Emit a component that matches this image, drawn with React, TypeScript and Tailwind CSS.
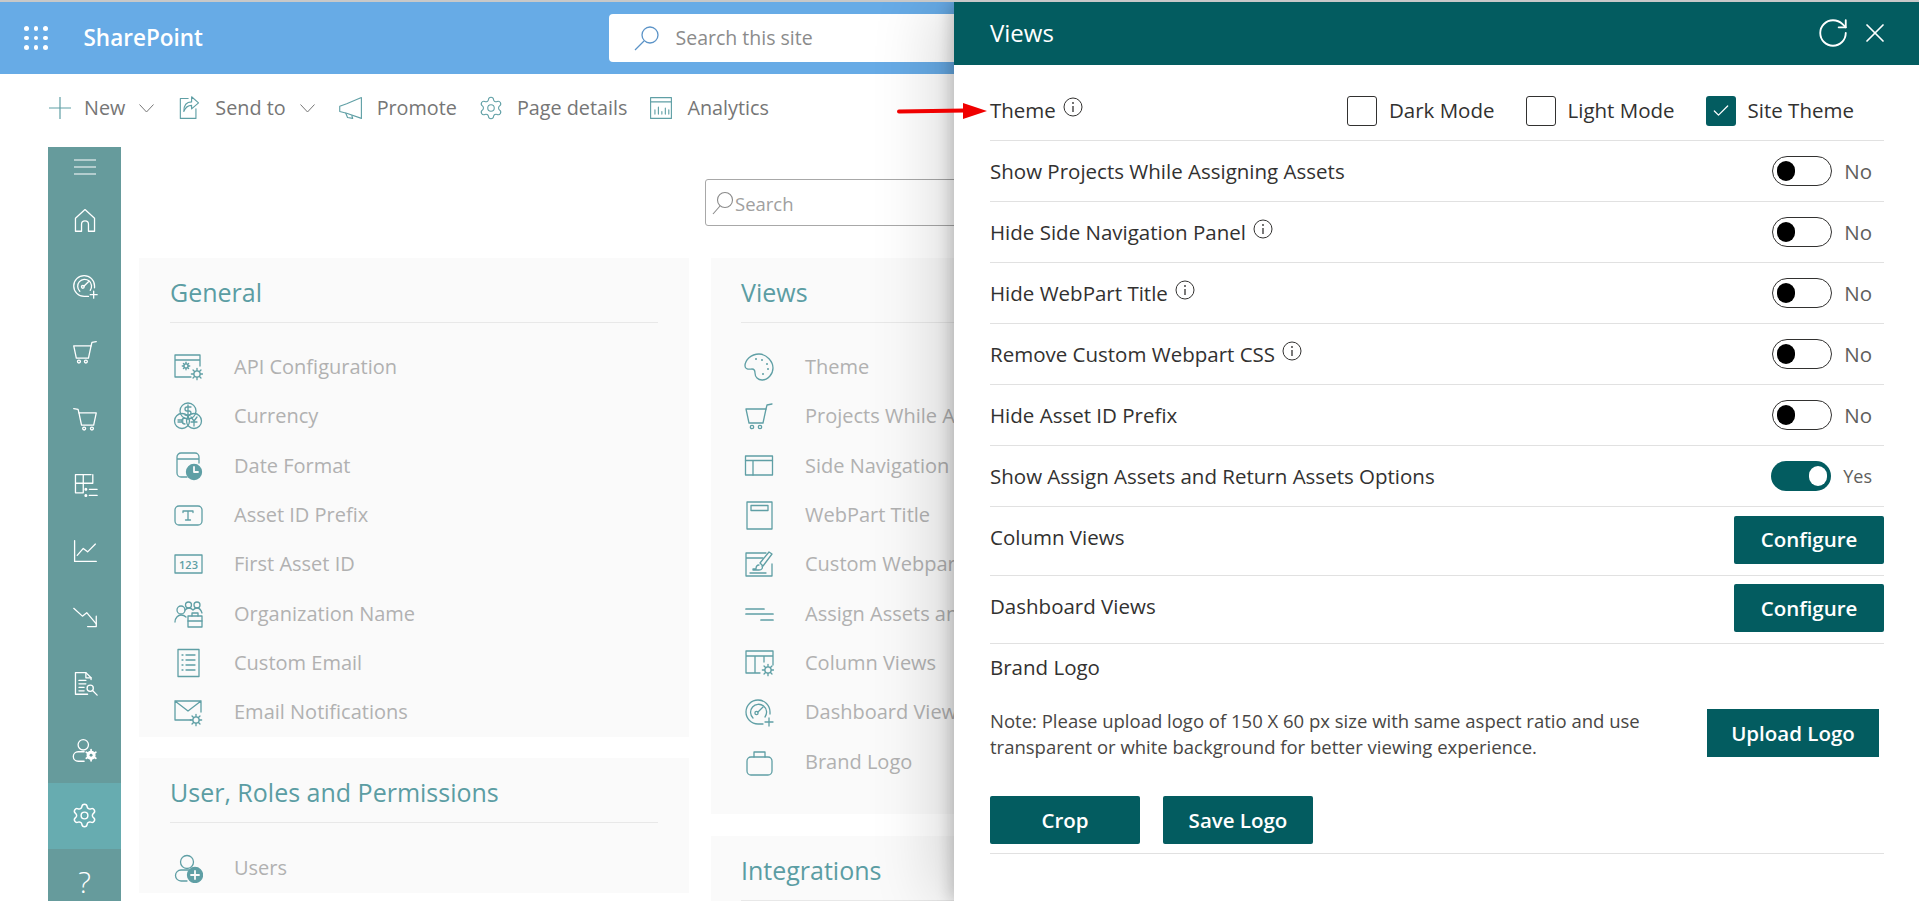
import React from 'react'
import { RotateCw, Settings, X, Check } from 'lucide-react'

function Svg({ size = 30, sw = 1.3, children, className = '' }: { size?: number; sw?: number; children: React.ReactNode; className?: string }) {
	return (
		<svg width={size} height={size} viewBox="0 0 30 30" fill="none" stroke="currentColor" strokeWidth={sw} strokeLinecap="round" strokeLinejoin="round" className={className}>
			{children}
		</svg>
	)
}

// small cog used on a lot of the settings icons
function Cog({ x, y, r = 4 }: { x: number; y: number; r?: number }) {
	const spokes = [0, 45, 90, 135, 180, 225, 270, 315]
	return (
		<g>
			<circle cx={x} cy={y} r={r * 0.7} fill="#fafafa" />
			{spokes.map(a => {
				const c = Math.cos((a * Math.PI) / 180)
				const s = Math.sin((a * Math.PI) / 180)
				return <line key={a} x1={x + c * r * 0.7} y1={y + s * r * 0.7} x2={x + c * r * 1.25} y2={y + s * r * 1.25} />
			})}
		</g>
	)
}

function Chevron() {
	return (
		<svg width="15" height="9" viewBox="0 0 15 9" fill="none" stroke="currentColor" strokeWidth="1" className="ml-[14px]">
			<path d="M0.500 0.500L7.500 8L14.500 0.500" />
		</svg>
	)
}

const cartRight = (
	<>
		<path d="M2 8h20l-3 14H5z" />
		<path d="M22 8l1-4 5-1" />
		<circle cx="8" cy="26" r="1.7" />
		<circle cx="16" cy="26" r="1.7" />
	</>
)
const cartLeft = (
	<>
		<path d="M8 8h20l-3 14H11z" />
		<path d="M8 8L7 4 2 3" />
		<circle cx="14" cy="26" r="1.7" />
		<circle cx="23" cy="26" r="1.7" />
	</>
)
const gauge = (
	<>
		<path d="M19 27H14A12 12 0 1 1 26 15v2" />
		<path d="M9 21a8 8 0 1 1 12-1" />
		<circle cx="12.5" cy="16" r="1.6" />
		<path d="M14 15l5-5" />
		<path d="M25 21v8M21 25h8" />
	</>
)

const sideIcons: React.ReactNode[] = [
	<path key="home" d="M4 28V13L15 3l11 10v15h-7v-8a4 4 0 0 0-8 0v8z" />,
	<g key="gauge">{gauge}</g>,
	<g key="c1">{cartRight}</g>,
	<g key="c2">{cartLeft}</g>,
	<g key="grid">
		<path d="M22 3H4v21h9M4 13h20V3M13 3v21" />
		<circle cx="16" cy="20" r="1" fill="currentColor" />
		<circle cx="16" cy="27" r="1" fill="currentColor" />
		<path d="M20 20h9M20 27h9" />
	</g>,
	<g key="line">
		<path d="M3 3v24h25" />
		<path d="M6 20l7-8 5 4 9-9" />
	</g>,
	<g key="down">
		<path d="M2 5l10 9 5-4 11 13" />
		<path d="M28 14v12H18" />
	</g>,
	<g key="doc">
		<path d="M22 11v-2l-6-6H4v25h14" />
		<path d="M16 3v6h6M8 12h8M8 16h8M8 20h6M8 24h6" />
		<circle cx="21" cy="21" r="3.6" />
		<path d="M24 24l5 5" />
	</g>,
	<g key="usercog">
		<circle cx="13" cy="9" r="6" />
		<path d="M14 28H7a5 5 0 0 1 0-11h7" />
		<circle cx="22" cy="21" r="4.5" fill="currentColor" />
		<path d="M22 14.500v13M16.500 17.500l11 7M27.500 17.500l-11 7" strokeWidth="2" />
		<circle cx="22" cy="21" r="1.700" fill="#669b9c" stroke="none" />
	</g>,
]

const rowIcons: Record<string, React.ReactNode> = {
	api: (
		<>
			<path d="M27 14V3H2v22h16M2 8h25" />
			<Cog x={13} y={14} r={3} />
			<Cog x={24} y={22} r={4.5} />
		</>
	),
	currency: (
		<>
			<circle cx="15" cy="10" r="8" />
			<circle cx="9" cy="20" r="7.5" />
			<circle cx="21" cy="20" r="7.5" />
			<path d="M18 6h-4a2 2 0 0 0 0 4h2a2 2 0 0 1 0 4h-4M15 4v12M12 17a3 3 0 1 0 0 6M5 19h5M5 21h5M18 16l3 4 3-4M21 20v5M18 21h6" />
		</>
	),
	date: (
		<>
			<path d="M14 26H8a4 4 0 0 1-4-4V6a4 4 0 0 1 4-4h14a4 4 0 0 1 4 4v6M4 8h22" />
			<circle cx="21" cy="21" r="7.5" fill="currentColor" />
			<path d="M21 16v5h4" stroke="#fafafa" strokeWidth="1.8" />
		</>
	),
	prefix: (
		<>
			<rect x="2" y="6" width="27" height="19" rx="4" />
			<path d="M10 11h10M15 11v9M12.5 20h5M10 11v1.5M20 11v1.5" />
		</>
	),
	first: (
		<>
			<rect x="2" y="6" width="27" height="18" />
			<text x="15.5" y="19.5" textAnchor="middle" fontSize="11" fontWeight="600" fill="currentColor" stroke="none" fontFamily='"Open Sans", sans-serif'>123</text>
		</>
	),
	org: (
		<>
			<circle cx="8" cy="11" r="4" />
			<path d="M2 23c0-4 3-7 6-7s4 1 5 2" />
			<circle cx="15.500" cy="6" r="3" />
			<circle cx="24" cy="6" r="3" />
			<path d="M12 11c1-1 2-2 4-2s3 1 4 2c1-1 2-2 4-2s4 2 5 5" />
			<rect x="15" y="17" width="14" height="11" />
			<path d="M19 17v-3h6v3M15 22h14" />
		</>
	),
	email: (
		<>
			<rect x="5" y="1.500" width="21" height="27" />
			<path d="M9 7h1M13 7h9M9 12h1M13 12h9M9 17h1M13 17h9M9 22h1M13 22h9" />
		</>
	),
	notif: (
		<>
			<path d="M18 23H2V4h26v11M2 4l13 10L28 4" />
			<Cog x={23} y={23} r={4.5} />
		</>
	),
	users: (
		<>
			<circle cx="14" cy="9" r="6.500" />
			<path d="M14 28H8a5.500 5.500 0 0 1 0-11h8" />
			<circle cx="22" cy="22" r="7.500" fill="currentColor" />
			<path d="M22 18v8M18 22h8" stroke="#fafafa" strokeWidth="1.8" />
		</>
	),
	theme: (
		<>
			<path d="M15 2C7 2 1 8 1 14c0 4 5 3 7 3s3 2 3 4c0 4 3 7 7 7 6 0 11-6 11-12S23 2 15 2z" />
			<g fill="currentColor" stroke="none">
				<circle cx="12" cy="7" r="1" />
				<circle cx="18" cy="8" r="1" />
				<circle cx="23" cy="12" r="1" />
				<circle cx="24" cy="17" r="1" />
				<circle cx="19" cy="22" r="1" />
			</g>
		</>
	),
	cart: cartRight,
	side: (
		<>
			<rect x="1.500" y="5" width="27" height="19" />
			<path d="M1.500 9.500h27M9 9.500V24" />
		</>
	),
	title: (
		<>
			<rect x="3" y="2" width="25" height="27" />
			<rect x="7" y="5.500" width="17" height="5" />
		</>
	),
	custom: (
		<>
			<path d="M28 15v12H2V4h20M2 9h17" />
			<path d="M28 5l-3-2-9 11 3 3z" />
			<path d="M15 16c-2 0-3 2-3 4h-3v1h6c3 0 4-2 3-4M6 24h16" />
		</>
	),
	assign: <path d="M2 10h18M2 15h27M17 21h12" strokeWidth="1.700" />,
	column: (
		<>
			<path d="M16 25H2V3h27v14M2 8h27M11 8v17M20 8v6" />
			<Cog x={24} y={22} r={4.5} />
		</>
	),
	dash: gauge,
	logo: (
		<>
			<rect x="3" y="10" width="25" height="18" rx="4" />
			<path d="M10 10V5h11v5" />
		</>
	),
}

const general = [
	['api', 'API Configuration'],
	['currency', 'Currency'],
	['date', 'Date Format'],
	['prefix', 'Asset ID Prefix'],
	['first', 'First Asset ID'],
	['org', 'Organization Name'],
	['email', 'Custom Email'],
	['notif', 'Email Notifications'],
]

// long labels stop where the open panel cuts them off
const views = [
	['theme', 'Theme'],
	['cart', 'Projects While As'],
	['side', 'Side Navigation'],
	['title', 'WebPart Title'],
	['custom', 'Custom Webpart CSS'],
	['assign', 'Assign Assets and'],
	['column', 'Column Views'],
	['dash', 'Dashboard Views'],
	['logo', 'Brand Logo'],
]

function Card({ title, items, className = 'pl-[31px]' }: { title: string; items: string[][]; className?: string }) {
	return (
		<section className={`bg-[#fafafa] pr-[31px] ${className}`}>
			<h2 className="h-[65px] border-b border-[#e8e8e8] pt-[15px] text-[25px] leading-[38px] text-[#5b9da3] whitespace-nowrap">{title}</h2>
			<ul className="pb-[0.500px] pt-[19.500px]">
				{items.map(([icon, label]) => (
					<li key={label} className="flex h-[49.3px] items-center whitespace-nowrap text-[20px] text-[#b1b1b1]">
						<span className="flex w-[64px] pl-[3px] text-[#5f9fa5]">
							<Svg>{rowIcons[icon]}</Svg>
						</span>
						{label}
					</li>
				))}
			</ul>
		</section>
	)
}

function Info() {
	return (
		<svg width="20" height="20" viewBox="0 0 20 20" fill="none" stroke="#323130" strokeWidth="1" className="mb-[7px] ml-[7px] shrink-0">
			<circle cx="10" cy="10" r="9" />
			<path d="M10 9v6" strokeWidth="1.300" />
			<circle cx="10" cy="6" r="0.900" fill="#323130" stroke="none" />
		</svg>
	)
}

function ToggleRow({ label, info, on }: { label: string; info?: boolean; on?: boolean }) {
	return (
		<div className="flex h-[61px] items-center justify-between border-b border-[#e1e1e1]">
			<div className="flex items-center">
				<span className="font-medium">{label}</span>
				{info && <Info />}
			</div>
			<div className="flex items-center gap-[12px] pr-[12px]">
				{on ? (
					<span className="flex h-[30px] w-[60px] items-center justify-end rounded-full bg-[#035c60] pr-[4px]">
						<span className="h-[20px] w-[18px] rounded-full bg-white" />
					</span>
				) : (
					<span className="flex h-[30px] w-[60px] items-center rounded-full border border-[#323130] pl-[4px]">
						<span className="h-[20px] w-[18px] rounded-full bg-black" />
					</span>
				)}
				<span className={on ? 'text-[18px] text-[#605e5c]' : 'text-[#605e5c]'}>{on ? 'Yes' : 'No'}</span>
			</div>
		</div>
	)
}

function TealButton({ children, className = '' }: { children: React.ReactNode; className?: string }) {
	return <button className={`h-[48px] rounded-[2px] bg-[#035c60] font-semibold text-white ${className}`}>{children}</button>
}

function CheckOption({ label, checked }: { label: string; checked?: boolean }) {
	return (
		<label className="flex items-center gap-[12px]">
			{checked ? (
				<span className="flex h-[30px] w-[30px] items-center justify-center rounded-[3px] bg-[#035c60] text-white">
					<Check size={20} strokeWidth={1.5} />
				</span>
			) : (
				<span className="h-[30px] w-[30px] rounded-[3px] border border-[#323130]" />
			)}
			<span className="font-medium">{label}</span>
		</label>
	)
}

function App() {
	return (
		<div className="relative h-[901px] w-[1919px] overflow-hidden border-t-2 border-[#c8c8c8] bg-white text-[#323130]" style={{ fontFamily: '"Open Sans", "Noto Sans", sans-serif' }}>
			{/* suite bar */}
			<header className="flex h-[72px] items-center bg-[#67abe6]">
				<div className="ml-[24px] grid grid-cols-3 gap-x-[5px] gap-y-[5px]">
					{[...Array(9)].map((_, i) => (
						<span key={i} className="h-[4.500px] w-[4.500px] rounded-full bg-white" />
					))}
				</div>
				<span className="ml-[36px] w-[118px] whitespace-nowrap text-[22.500px] font-semibold text-white">SharePoint</span>
				<div className="ml-[407px] flex h-[48px] w-[400px] items-center rounded-[4px] bg-white pl-[25px] text-[19.500px] text-[#8b8b8b]">
					<svg width="26" height="26" viewBox="0 0 26 26" fill="none" stroke="#5b93c7" strokeWidth="1.300">
						<circle cx="16" cy="10" r="8" />
						<path d="M10 16L1 25" />
					</svg>
					<span className="ml-[16px]">Search this site</span>
				</div>
			</header>

			{/* command bar */}
			<nav className="flex h-[73px] items-center pb-[5px] pl-[49px] text-[19.800px] text-[#767676]">
				<svg width="22" height="22" viewBox="0 0 22 22" stroke="#5f9fa5" strokeWidth="1.200">
					<path d="M11 0v22M0 11h22" />
				</svg>
				<span className="ml-[13px]">New</span>
				<Chevron />
				<Svg size={26} className="ml-[22px] text-[#5f9fa5]">
					<path d="M14 4H5v23h18V16" />
					<path d="M18 2l8 7-8 7v-4c-5 0-7 2-9 7 0-7 3-11 9-11z" />
				</Svg>
				<span className="ml-[13px]">Send to</span>
				<Chevron />
				<Svg size={26} className="ml-[23px] text-[#5f9fa5]">
					<path d="M27 3v24L10 21l-8-2v-6l8-3z" />
					<path d="M9 21l2 5 6 1-1-3" />
				</Svg>
				<span className="ml-[13px]">Promote</span>
				<Settings size={26} strokeWidth={1} className="ml-[21px] text-[#5f9fa5]" />
				<span className="ml-[13px]">Page details</span>
				<Svg size={26} className="ml-[21px] text-[#5f9fa5]">
					<rect x="3" y="3" width="24" height="24" />
					<path d="M3 8h24M8 22v-5M12 22v-8M16 22v-3M20 22v-7M24 22v-5" />
				</Svg>
				<span className="ml-[13px]">Analytics</span>
			</nav>

			<div className="flex pl-[48px]">
				{/* left rail */}
				<aside className="flex h-[754px] w-[73px] shrink-0 flex-col items-center overflow-hidden bg-[#669b9c] text-white">
					<div className="flex h-[40px] shrink-0 items-center">
						<svg width="22" height="16" viewBox="0 0 22 16" stroke="currentColor" strokeWidth="1.200">
							<path d="M0 1h22M0 8h22M0 15h22" />
						</svg>
					</div>
					{sideIcons.map((icon, i) => (
						<div key={i} className="flex h-[66.200px] w-full shrink-0 items-center justify-center">
							<Svg size={26} sw={1.500}>{icon}</Svg>
						</div>
					))}
					<div className="flex h-[66px] w-full shrink-0 items-center justify-center bg-[#67acb0]">
						<Settings size={27} strokeWidth={1.300} />
					</div>
					<div className="flex h-[66px] w-full shrink-0 items-center justify-center text-[30px] font-light">?</div>
				</aside>

				{/* settings tiles */}
				<main className="min-w-0 flex-1 pl-[18px]">
					<div className="ml-[566px] mt-[32px] flex h-[47px] w-[500px] items-center rounded-[3px] border border-[#a8a8a8] pl-[6px] text-[18.500px] text-[#a0a0a0]">
						<svg width="22" height="24" viewBox="0 0 22 24" fill="none" stroke="#8a8a8a" strokeWidth="1.100">
							<circle cx="13" cy="9" r="7.500" />
							<path d="M8 15l-7 8" />
						</svg>
						<span className="ml-[1px] pt-[2px]">Search</span>
					</div>
					<div className="mt-[32px] flex items-start gap-[22px]">
						<div className="flex w-[550px] shrink-0 flex-col gap-[21px]">
							<Card title="General" items={general} />
							<Card title="User, Roles and Permissions" items={[['users', 'Users']]} />
						</div>
						<div className="flex w-[550px] shrink-0 flex-col gap-[22px]">
							<Card title="Views" items={views} className="pb-[27px] pl-[30px]" />
							<Card title="Integrations" items={[]} className="pl-[30px]" />
						</div>
					</div>
				</main>
			</div>

			{/* views panel */}
			<aside className="absolute bottom-0 right-0 top-0 w-[965px] bg-white text-[20.500px] shadow-[-4px_0_14px_rgba(0,0,0,0.18),-20px_0_60px_rgba(0,0,0,0.14)]">
				<div className="flex h-[63px] items-center justify-between bg-[#035c60] pb-[2px] pl-[36px] pr-[28px] text-white">
					<span className="text-[24px]">Views</span>
					<div className="flex items-center gap-[9px]">
						<RotateCw size={34} strokeWidth={1.300} />
						<X size={32} strokeWidth={1.300} />
					</div>
				</div>
				<div className="pl-[36px] pr-[35px]">
					<div className="flex h-[76px] items-center justify-between border-b border-[#e1e1e1] pr-[30px] pt-[16px]">
						<div className="flex items-center">
							<span className="font-medium">Theme</span>
							<Info />
						</div>
						<div className="flex items-center gap-[31px]">
							<CheckOption label="Dark Mode" />
							<CheckOption label="Light Mode" />
							<CheckOption label="Site Theme" checked />
						</div>
					</div>
					<ToggleRow label="Show Projects While Assigning Assets" />
					<ToggleRow label="Hide Side Navigation Panel" info />
					<ToggleRow label="Hide WebPart Title" info />
					<ToggleRow label="Remove Custom Webpart CSS" info />
					<ToggleRow label="Hide Asset ID Prefix" />
					<ToggleRow label="Show Assign Assets and Return Assets Options" on />
					<div className="flex h-[69px] items-center justify-between border-b border-[#e1e1e1] pb-[3px]">
						<span className="mb-[4px] font-medium">Column Views</span>
						<TealButton className="w-[150px]">Configure</TealButton>
					</div>
					<div className="flex h-[68px] items-center justify-between border-b border-[#e1e1e1] pb-[3px]">
						<span className="mb-[3px] font-medium">Dashboard Views</span>
						<TealButton className="w-[150px]">Configure</TealButton>
					</div>
					<div className="h-[210px] border-b border-[#e1e1e1]">
						<div className="pt-[9px] font-medium leading-[28px]">Brand Logo</div>
						<div className="mt-[28px] flex items-start justify-between pr-[5px]">
							<p className="-mt-[1px] text-[18.500px] leading-[26px] text-[#484644]">
								Note: Please upload logo of 150 X 60 px size with same aspect ratio and use
								<br />
								transparent or white background for better viewing experience.
							</p>
							<TealButton className="w-[172px] rounded-none">Upload Logo</TealButton>
						</div>
						<div className="mt-[36px] flex gap-[23px]">
							<TealButton className="w-[150px]">Crop</TealButton>
							<TealButton className="w-[150px]">Save Logo</TealButton>
						</div>
					</div>
				</div>
			</aside>

			{/* annotation arrow */}
			<svg width="90" height="18" viewBox="0 0 90 18" className="absolute left-[897px] top-[100px]">
				<path d="M2 9.500L68 8.500" stroke="#f00000" strokeWidth="4" strokeLinecap="round" />
				<path d="M66 1l24 8-24 8z" fill="#f00000" />
			</svg>
		</div>
	)
}

export default App
